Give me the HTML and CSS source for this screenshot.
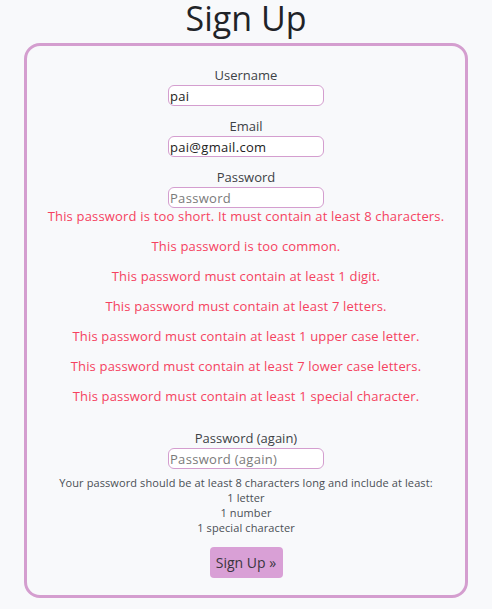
FILE: index.html
```html
<!DOCTYPE html>
<html lang="en">
<head>
<meta charset="utf-8">
<title>Sign Up</title>
<link rel="stylesheet" href="styles.css">
</head>
<body>
<h1 class="title">Sign Up</h1>
<form class="card">
  <div class="group">
    <label class="label" for="username">Username</label>
    <input class="field" id="username" type="text" value="pai" placeholder="Username">
  </div>
  <div class="group">
    <label class="label" for="email">Email</label>
    <input class="field" id="email" type="email" value="pai@gmail.com" placeholder="Email">
  </div>
  <div class="group group-pw">
    <label class="label" for="password1">Password</label>
    <input class="field" id="password1" type="password" placeholder="Password">
  </div>
  <ul class="errors">
    <li>This password is too short. It must contain at least 8 characters.</li>
    <li>This password is too common.</li>
    <li>This password must contain at least 1 digit.</li>
    <li>This password must contain at least 7 letters.</li>
    <li>This password must contain at least 1 upper case letter.</li>
    <li>This password must contain at least 7 lower case letters.</li>
    <li>This password must contain at least 1 special character.</li>
  </ul>
  <div class="group group-again">
    <label class="label" for="password2">Password (again)</label>
    <input class="field" id="password2" type="password" placeholder="Password (again)">
  </div>
  <div class="help">
    <div>Your password should be at least 8 characters long and include at least:</div>
    <div>1 letter</div>
    <div>1 number</div>
    <div>1 special character</div>
  </div>
  <button class="submit" type="submit">Sign Up &raquo;</button>
</form>
</body>
</html>
```
FILE: styles.css
```css
html, body {
  margin: 0;
  padding: 0;
}
body {
  background: #f8f9fb;
  font-family: "Open Sans", "DejaVu Sans", sans-serif;
  color: #3d4246;
}
.title {
  margin: 0;
  height: 43px;
  line-height: 36px;
  font-size: 34px;
  font-weight: 400;
  text-align: center;
  color: #1f2328;
}
.card {
  box-sizing: border-box;
  margin: 0 24px;
  height: 555px;
  border: 3px solid #d49ecf;
  border-radius: 16px;
  padding: 20px 0 0;
  display: flex;
  flex-direction: column;
  align-items: center;
}
.group {
  display: flex;
  flex-direction: column;
  align-items: center;
  margin-bottom: 11px;
}
.group-pw {
  margin-bottom: 0;
}
.label {
  font-size: 13px;
  line-height: 19px;
  height: 19px;
}
.field {
  box-sizing: border-box;
  width: 156px;
  height: 21px;
  margin: 0;
  padding: 0 1px;
  border: 1px solid #d49ecf;
  border-radius: 6px;
  background: #fff;
  font-family: inherit;
  font-size: 13px;
  letter-spacing: 0.3px;
  color: #222;
  outline: none;
}
.field::placeholder {
  color: #7a7a7a;
}
.errors {
  list-style: none;
  margin: 0;
  padding: 0;
  text-align: center;
  color: #f5425f;
  font-size: 13px;
  letter-spacing: 0.18px;
  line-height: 16px;
}
.errors li {
  margin-bottom: 14px;
}
.errors li:last-child {
  margin-bottom: 0;
}
.group-again {
  margin-top: 25px;
  margin-bottom: 6px;
}
.help {
  text-align: center;
  font-size: 11px;
  letter-spacing: 0.1px;
  line-height: 15px;
  color: #4a4f55;
}
.submit {
  margin-top: 12px;
  width: 73px;
  height: 31px;
  padding: 0;
  border: none;
  border-radius: 4px;
  background: #d9a0d6;
  font-family: inherit;
  font-size: 14px;
  color: #3a3540;
}
```
